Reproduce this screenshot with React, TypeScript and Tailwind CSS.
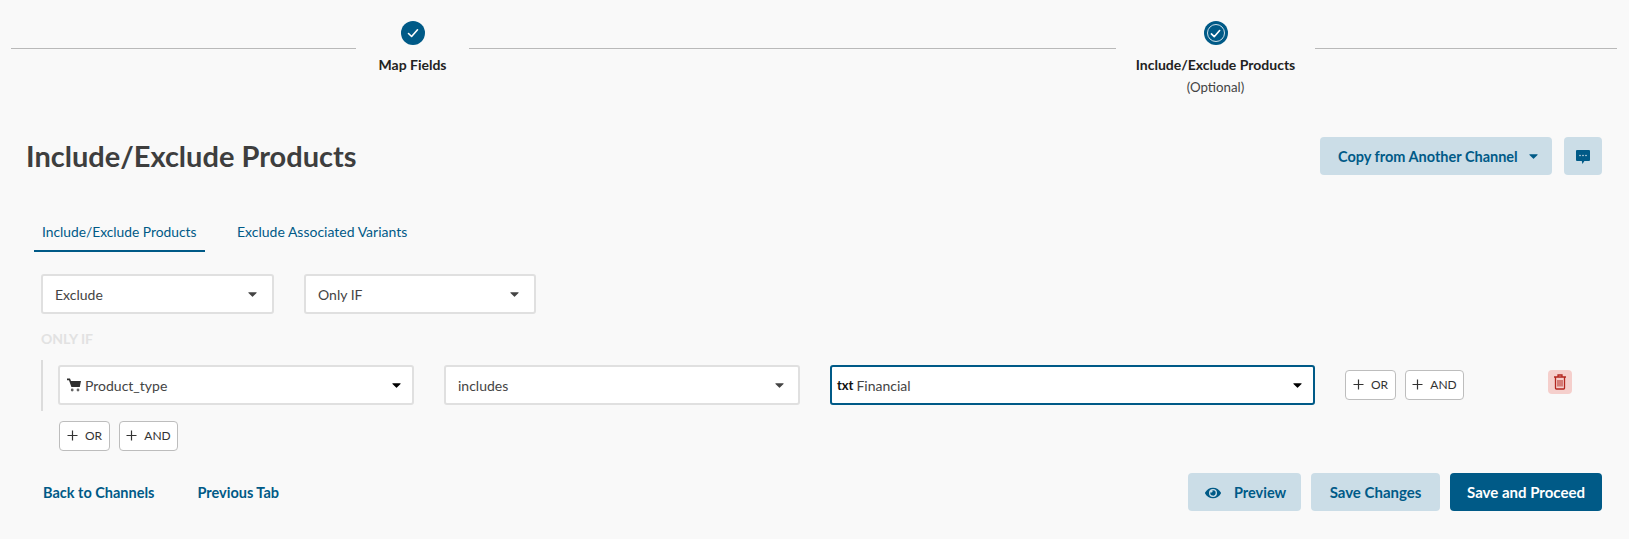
import { FaEye } from 'react-icons/fa';

const BLUE = 'text-[#005a87]';

function Caret({ className = 'fill-[#444]' }: { className?: string }) {
  return (
    <svg width="9" height="5" viewBox="0 0 10 6" className={className}>
      <path d="M0.6 0.4h8.8c.5 0 .7.5.4.9L5.5 5.5c-.3.3-.7.3-1 0L.2 1.3C-.1.9.1.4.6.4z" />
    </svg>
  );
}

function Check({ size = 12, weight = 1.6 }: { size?: number; weight?: number }) {
  return (
    <svg width={size} height={size} viewBox="0 0 12 12" fill="none" stroke="white" strokeWidth={weight} strokeLinecap="round" strokeLinejoin="round">
      <path d="M1.5 6.5 4.6 9.5 10.5 2.8" />
    </svg>
  );
}

function CartIcon() {
  return (
    <svg width="14" height="14" viewBox="0 0 14 14" className="-ml-[5px] mr-[4px] fill-[#2e2e2e]">
      <path d="M0 .5h3l1 2.5H14l-1.2 6H4.4L2 2.2H0z" />
      <circle cx="5.2" cy="12" r="1.4" fill="#666" />
      <circle cx="11" cy="12" r="1.4" fill="#666" />
    </svg>
  );
}

function CommentIcon() {
  return (
    <svg width="14" height="14" viewBox="0 0 14 14" className="mt-px">
      <path d="M1 0h12a1 1 0 0 1 1 1v9a1 1 0 0 1-1 1H8.4L6.4 14l-.6-3H1a1 1 0 0 1-1-1V1a1 1 0 0 1 1-1z" fill="#005a87" />
      <circle cx="4" cy="5.5" r=".8" fill="#cbdde7" />
      <circle cx="7" cy="5.5" r=".8" fill="#cbdde7" />
      <circle cx="10" cy="5.5" r=".8" fill="#cbdde7" />
    </svg>
  );
}

function TrashIcon() {
  return (
    <svg width="12" height="16" viewBox="0 0 12 16" fill="none" stroke="#b3261e" strokeWidth="1.3">
      <path d="M0 3h12M4 3V1h4v2M1.5 3v11.2c0 .5.3.8.8.8h7.4c.5 0 .8-.3.8-.8V3" />
      <path d="M4 6v6.5M6 6v6.5M8 6v6.5" strokeWidth="1" />
    </svg>
  );
}

// widths come straight from the reference, the row isn't meant to be fluid
function Select({
  width,
  active,
  children,
  caret,
  padRight = 'pr-[15px]',
}: {
  width: string;
  active?: boolean;
  children: React.ReactNode;
  caret?: string;
  padRight?: string;
}) {
  return (
    <div
      className={[
        'flex h-10 items-center justify-between rounded-[3px] border-2 bg-white pl-3 text-[14px] text-[#444]',
        width,
        padRight,
        active ? 'border-[#005a87] pl-[5px]' : 'border-[#e0e0e0]',
      ].join(' ')}
    >
      <span className="flex min-w-0 items-center">{children}</span>
      <Caret className={caret} />
    </div>
  );
}

function AddButton({ label, width }: { label: string; width: string }) {
  return (
    <button
      type="button"
      className={[
        'flex h-[30px] items-center justify-center gap-[7px] rounded-[4px] border border-[#bdbdbd] bg-white text-[#333]',
        width,
      ].join(' ')}
    >
      <svg width="11" height="11" viewBox="0 0 11 11" stroke="#333" strokeWidth="1.2" className="-mt-px">
        <path d="M5.5 0.5v10M0.5 5.5h10" />
      </svg>
      <span className="font-['Lato',sans-serif] text-[12px]">{label}</span>
    </button>
  );
}

function Line({ width }: { width: string }) {
  return <div className={`mt-[27px] h-px bg-[#b9b9b9] ${width}`} />;
}

export default function App() {
  return (
    <div className="h-[539px] w-full bg-[#f9f9f9] font-['Lato',sans-serif] text-[#333]">
      {/* stepper */}
      <div className="flex pl-[11px] pt-[21px]">
        <Line width="w-[345px]" />
        <div className="flex w-[113px] flex-col items-center">
          <div className="flex h-6 w-6 items-center justify-center rounded-full bg-[#005a87]">
            <Check />
          </div>
          <p className="mt-[10px] text-[14px] font-bold leading-[20px] text-[#222]">Map Fields</p>
        </div>
        <Line width="w-[647px]" />
        <div className="flex w-[199px] flex-col items-center">
          <div className="flex h-6 w-6 items-center justify-center rounded-full bg-[#005a87]">
            <div className="flex h-[18px] w-[18px] items-center justify-center rounded-full border-[1.5px] border-[#cfe0ea]">
              <Check size={11} weight={1.8} />
            </div>
          </div>
          <p className="mt-[10px] text-[14px] font-bold leading-[20px] text-[#222]">Include/Exclude Products</p>
          <p className="mt-[2px] text-[13.3px] leading-[20px] text-[#444]">(Optional)</p>
        </div>
        <Line width="w-[302px]" />
      </div>

      {/* header */}
      <div className="mt-[40px] flex h-[38px] items-center pl-[26px] pr-[27px]">
        <h1 className="flex-1 text-[29px] font-bold text-[#3e3e3e]">Include/Exclude Products</h1>
        <button
          type="button"
          className={`flex h-[38px] w-[232px] items-center gap-[11px] rounded-[4px] bg-[#cbdde7] pl-[18px] pt-px text-[14.5px] font-bold ${BLUE}`}
        >
          Copy from Another Channel
          <Caret className="fill-[#005a87]" />
        </button>
        <button type="button" className="ml-3 flex h-[38px] w-[38px] items-center justify-center rounded-[4px] bg-[#cbdde7]">
          <CommentIcon />
        </button>
      </div>

      {/* tabs */}
      <div className={`ml-[34px] mt-[47px] flex text-[14px] ${BLUE}`}>
        <div className="h-[30px] w-[171px] border-b-2 border-[#005a87] pl-2 text-[13.8px] leading-[20px]">Include/Exclude Products</div>
        <div className="ml-[32px] leading-[20px]">Exclude Associated Variants</div>
      </div>

      <div className="ml-[41px] mt-[22px] flex gap-[30px]">
        <Select width="w-[233px]">Exclude</Select>
        <Select width="w-[232px]">Only IF</Select>
      </div>

      <p className="ml-[41px] mt-[17px] text-[14px] font-bold leading-[16px] text-[#e2e2e2]">ONLY IF</p>

      {/* rule group */}
      <div className="ml-[41px] mt-[13px] flex border-l-2 border-[#dcdcdc] pb-[6px] pl-[15px] pt-[5px]">
        <Select width="w-[356px]" caret="fill-black" padRight="pr-[11px]">
          <CartIcon />
          Product_type
        </Select>
        <div className="w-[30px]" />
        <Select width="w-[356px]" padRight="pr-[14px]">includes</Select>
        <div className="w-[30px]" />
        <Select width="w-[485px]" active caret="fill-black" padRight="pr-[11px]">
          <b className="mr-[3px] text-[13px] font-bold leading-[20px] text-[#111]">txt</b>
          Financial
        </Select>
        <div className="ml-[30px] mt-[5px] flex gap-[9px]">
          <AddButton label="OR" width="w-[51px]" />
          <AddButton label="AND" width="w-[59px]" />
        </div>
        <div className="ml-[84px] mt-[5px] flex h-6 w-6 items-center justify-center rounded-[4px] bg-[#f5cfcc]">
          <TrashIcon />
        </div>
      </div>

      <div className="ml-[59px] mt-[10px] flex gap-[9px]">
        <AddButton label="OR" width="w-[51px]" />
        <AddButton label="AND" width="w-[59px]" />
      </div>

      {/* footer actions */}
      <div className={`mt-[22px] flex h-[38px] items-center pl-[43px] pr-[27px] text-[14.5px] font-bold ${BLUE}`}>
        <a className="pt-px">Back to Channels</a>
        <a className="ml-[43px] flex-1 pt-px">Previous Tab</a>
        <button type="button" className="flex h-[38px] w-[113px] items-center gap-[13px] rounded-[4px] bg-[#cbdde7] pl-[17px] pt-px text-[14.5px]">
          <FaEye size={16} />
          Preview
        </button>
        <button type="button" className="ml-[10px] h-[38px] w-[129px] rounded-[4px] bg-[#cbdde7] pt-px text-[15px]">
          Save Changes
        </button>
        <button type="button" className="ml-[10px] h-[38px] w-[152px] rounded-[4px] bg-[#005a87] pt-px text-[15px] text-white">
          Save and Proceed
        </button>
      </div>
    </div>
  );
}
